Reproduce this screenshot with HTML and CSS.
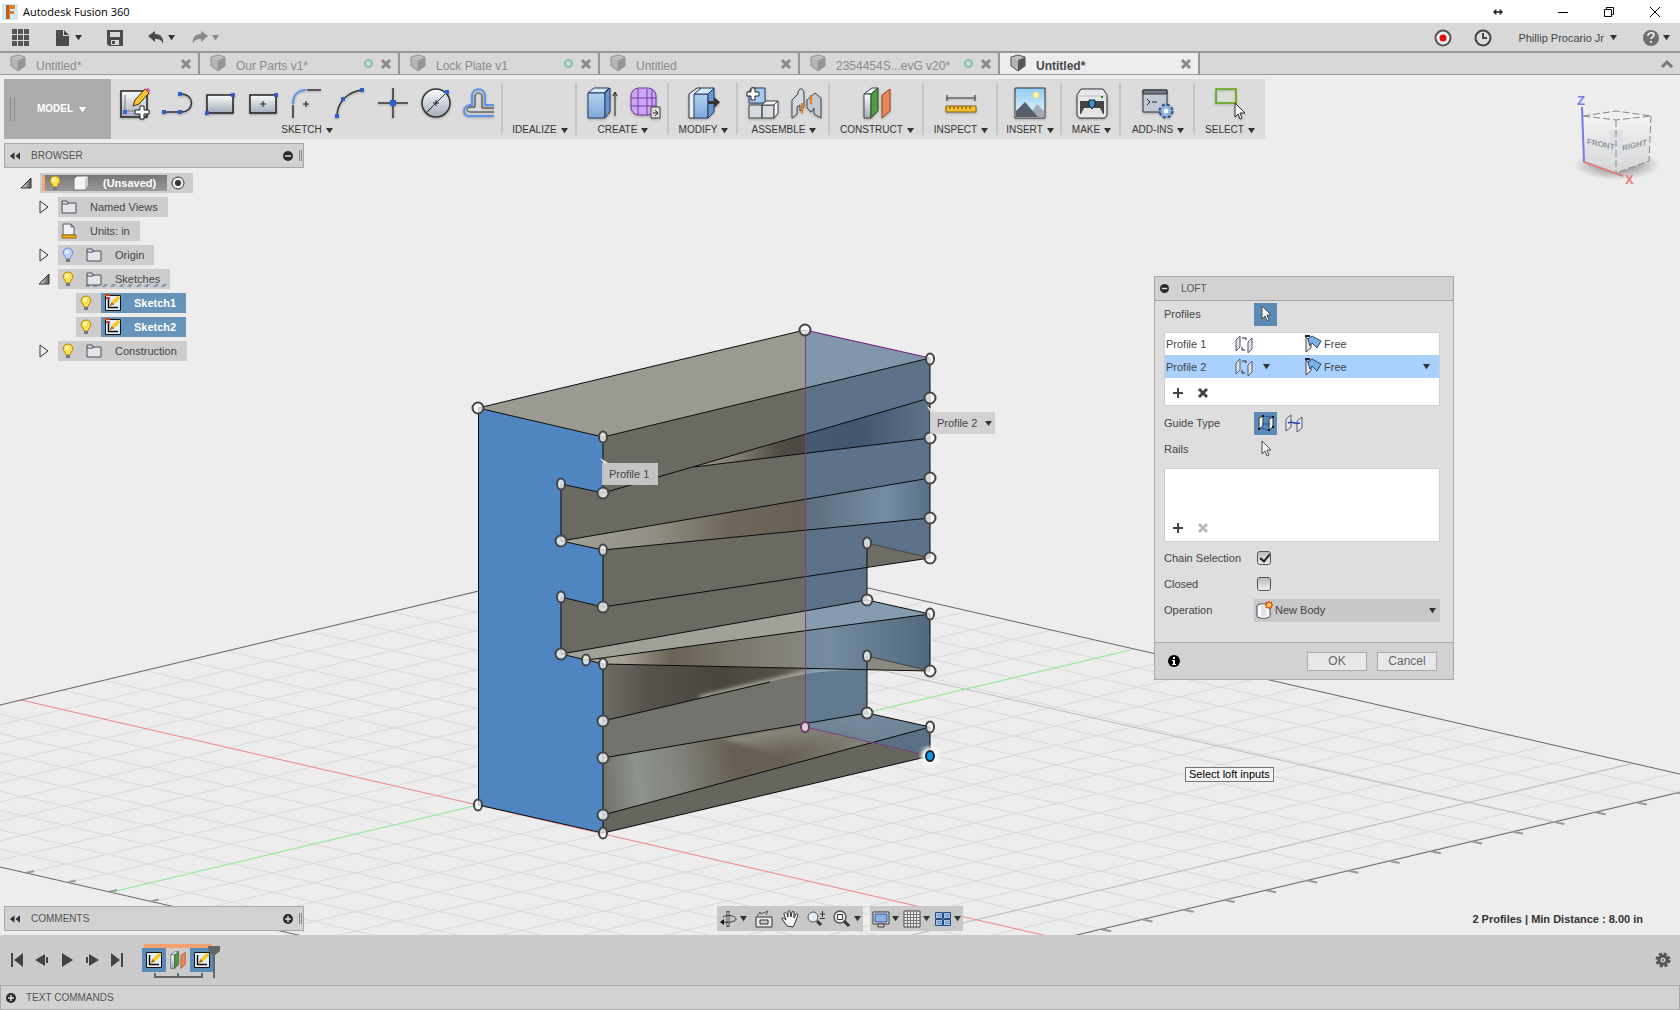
FILE: index.html
```html
<!DOCTYPE html>
<html lang="en">
<head>
<meta charset="utf-8">
<title>Autodesk Fusion 360</title>
<link rel="stylesheet" href="styles.css">
</head>
<body>
<svg class="defs" aria-hidden="true">
  <defs>
    <linearGradient id="g-steel" x1="0" y1="0" x2="0" y2="1"><stop offset="0" stop-color="#fafbfc"/><stop offset="1" stop-color="#a3abbb"/></linearGradient>
    <linearGradient id="g-blue" x1="0" y1="0" x2="0" y2="1"><stop offset="0" stop-color="#b4d2f0"/><stop offset="1" stop-color="#7fa8d8"/></linearGradient>
    <linearGradient id="g-sky" x1="0" y1="0" x2="0" y2="1"><stop offset="0" stop-color="#8ecdf5"/><stop offset="1" stop-color="#eef8fd"/></linearGradient>
    <linearGradient id="g-tri" x1="0" y1="0" x2="1" y2="0"><stop offset="0" stop-color="#eee"/><stop offset="1" stop-color="#555"/></linearGradient>
    <symbol id="i-down" viewBox="0 0 8 8"><path d="M0 1h8L4 7z" fill="currentColor"/></symbol>
    <symbol id="i-x" viewBox="0 0 12 12"><path d="M2 2l8 8M10 2l-8 8" stroke="currentColor" stroke-width="3"/></symbol>
    <symbol id="i-plus" viewBox="0 0 12 12"><path d="M6 1v10M1 6h10" stroke="currentColor" stroke-width="2"/></symbol>
    <symbol id="i-cubetab" viewBox="0 0 16 18"><path d="M8 1l7 2-7 3-7-3z" fill="#c0c0c0"/><path d="M1 3l7 3v11l-7-5z" fill="#b4b4b4"/><path d="M15 3L8 6v11l7-5z" fill="currentColor"/><path d="M8 1l7 2v9l-7 5-7-5V3z" fill="none" stroke="currentColor"/></symbol>
    <symbol id="i-rewind" viewBox="0 0 12 8"><path d="M6 0v8L1 4zM12 0v8L7 4z" fill="#333"/></symbol>
    <symbol id="i-minus-c" viewBox="0 0 10 10"><circle cx="5" cy="5" r="5" fill="#2b2b2b"/><path d="M2 5h6" stroke="#ddd" stroke-width="1.500"/></symbol>
    <symbol id="i-plus-c" viewBox="0 0 10 10"><circle cx="5" cy="5" r="5" fill="#2b2b2b"/><path d="M2 5h6M5 2v6" stroke="#ddd" stroke-width="1.500"/></symbol>
    <symbol id="i-bulb" viewBox="0 0 12 16"><path d="M6 1a4.600 4.600 0 0 1 3 8.300L8 12H4L3 9.300A4.600 4.600 0 0 1 6 1z" fill="#ffe04a" stroke="#b08a20"/><circle cx="5" cy="5" r="2" fill="#fff6b8"/><path d="M4 12h4v3H4z" fill="#777"/></symbol>
    <symbol id="i-bulb-off" viewBox="0 0 12 16"><path d="M6 1a4.600 4.600 0 0 1 3 8.300L8 12H4L3 9.300A4.600 4.600 0 0 1 6 1z" fill="#b9d0f7" stroke="#6f8dc8"/><circle cx="5" cy="5" r="2" fill="#e4eeff"/><path d="M4 12h4v3H4z" fill="#777"/></symbol>
    <symbol id="i-folder" viewBox="0 0 16 16"><path d="M1 14V2h5l1 2h8v10z" fill="#e3e5ea" stroke="#4a4f5c"/><path d="M1 5h6l1-1" fill="none" stroke="#4a4f5c"/></symbol>
    <symbol id="i-units" viewBox="0 0 16 16"><path d="M2 12V1h8l3 3v8z" fill="#f0f2f5" stroke="#555b68"/><path d="M10 1v3h3" fill="none" stroke="#555b68"/><path d="M1 12h14v3H1z" fill="#f0b020" stroke="#9a6a10"/></symbol>
    <symbol id="i-sketch" viewBox="0 0 18 18"><path d="M1.500 1.500h15v15h-15z" fill="#e4eefa" stroke="#111"/><path d="M4.500 4v9.500H14" fill="none" stroke="#111" stroke-width="1.500"/><path d="M6 12l1.500-4L14 1.500 16.500 4 10 10.500z" fill="#f9c81c"/><path d="M6 12l1.500-4 2.500 2.500z" fill="#b06a20"/></symbol>
    <symbol id="i-planes" viewBox="0 0 32 32"><path d="M3 7l8-6h6l-7 6z" fill="#f7f9fb" stroke="#444"/><path d="M3 7h7v24H3z" fill="url(#g-steel)" stroke="#444"/><path d="M10 7l7-6v23l-7 7z" fill="#4f9a42" stroke="#2b4e25"/><path d="M21 8l8-6v22l-8 7z" fill="#e8875a" stroke="#9a4324"/></symbol>
    <symbol id="i-cursor" viewBox="0 0 12 18"><path d="M2 1v13l3-3 2 5 2-1-2-5h4z" fill="#f4f4f8" stroke="#4a4a55"/></symbol>
    <symbol id="i-flip" viewBox="0 0 18 18"><path d="M1 5l4-4v11l-4 4zM13 7l4-4v11l-4 4z" fill="#dfe3f0" stroke="#555b68"/><path d="M7 3h4v2M10 15H7v-3" fill="none" stroke="#222"/></symbol>
    <symbol id="i-free" viewBox="0 0 18 18"><path d="M2 2v15l5-4V7z" fill="#e6e6e6" stroke="#444"/><path d="M4 4l4-3 9 5-4 7-5-5-2 3z" fill="#7db0e0" stroke="#23486e"/><path d="M1 1h5" stroke="#222" stroke-width="2"/></symbol>
  </defs>
</svg>

<header class="titlebar">
  <svg class="logo" viewBox="0 0 16 16"><rect width="16" height="16" fill="#cfe9f5"/><path d="M4 1h9v4H8v2h4v3H8v5H4z" fill="#e0802a"/><path d="M4 1h3v14H4z" fill="#b85f1c"/></svg>
  <h1>Autodesk Fusion 360</h1>
  <div class="wincontrols">
    <svg class="resize" viewBox="0 0 12 8"><path d="M0 4l4-4v3h4V0l4 4-4 4V5H4v3z" fill="#222"/></svg>
    <button aria-label="Minimize"><svg viewBox="0 0 12 12"><path d="M1 6.500h10" stroke="#000"/></svg></button>
    <button aria-label="Restore"><svg viewBox="0 0 12 12"><path d="M1.500 3.500h7v7h-7zM3.500 3v-1.500h7v7H9" fill="none" stroke="#000"/></svg></button>
    <button aria-label="Close"><svg viewBox="0 0 12 12"><path d="M1 1l10 10M11 1L1 11" stroke="#000"/></svg></button>
  </div>
</header>

<div class="quickbar">
  <div class="quick-left">
    <button aria-label="Data panel"><svg class="q18" viewBox="0 0 18 18"><path d="M0 0h5v5H0zM6 0h5v5H6zM12 0h5v5h-5zM0 6h5v5H0zM6 6h5v5H6zM12 6h5v5h-5zM0 12h5v5H0zM6 12h5v5H6zM12 12h5v5h-5z" fill="#555"/></svg></button>
    <button class="pair" aria-label="File"><svg class="q16" viewBox="0 0 16 16"><path d="M1 0h7v6h6v10H1z" fill="#4c4c4c"/><path d="M9 0l5 5H9z" fill="#4c4c4c"/></svg><svg class="dd"><use href="#i-down"/></svg></button>
    <button aria-label="Save"><svg class="q16" viewBox="0 0 16 16"><path d="M0 0h16v16H2l-2-2z" fill="#4c4c4c"/><path d="M3 2h10v5H3zM4 10h8v5H4z" fill="#d9d9d9"/><path d="M5 11h3v3H5z" fill="#4c4c4c"/></svg></button>
    <button class="pair" aria-label="Undo"><svg class="q16" viewBox="0 0 16 16"><path d="M0 6l7-5v3c6 0 9 4 8 10-1-4-4-5-8-5v3z" fill="#4c4c4c"/></svg><svg class="dd"><use href="#i-down"/></svg></button>
    <button class="pair dim" aria-label="Redo"><svg class="q16" viewBox="0 0 16 16"><path d="M16 6L9 1v3C3 4 0 8 1 14c1-4 4-5 8-5v3z" fill="#8a8a8a"/></svg><svg class="dd"><use href="#i-down"/></svg></button>
  </div>
  <div class="quick-right">
    <button aria-label="Record"><svg class="q18" viewBox="0 0 18 18"><circle cx="9" cy="9" r="7.500" fill="#eee" stroke="#555" stroke-width="2"/><circle cx="9" cy="9" r="3.500" fill="#e01010"/></svg></button>
    <button aria-label="Job status"><svg class="q18" viewBox="0 0 18 18"><circle cx="9" cy="9" r="7.500" fill="#ddd" stroke="#444" stroke-width="2"/><path d="M9 4v5h4" fill="none" stroke="#444" stroke-width="2"/></svg></button>
    <button class="account">Phillip Procario Jr <svg class="dd"><use href="#i-down"/></svg></button>
    <button class="help" aria-label="Help"><svg class="q18" viewBox="0 0 18 18"><circle cx="9" cy="9" r="8" fill="#6e6e6e"/><path d="M6 7c0-4 6-4 6-1 0 2-3 2-3 4M9 12v2" fill="none" stroke="#e4e4e4" stroke-width="2"/></svg><svg class="dd"><use href="#i-down"/></svg></button>
  </div>
</div>

<nav class="tabs">
  <div class="tab"><svg class="cube"><use href="#i-cubetab"/></svg><a href="#">Untitled*</a><button aria-label="Close"><svg><use href="#i-x"/></svg></button></div>
  <div class="tab"><svg class="cube"><use href="#i-cubetab"/></svg><a href="#">Our Parts v1*</a><i></i><button aria-label="Close"><svg><use href="#i-x"/></svg></button></div>
  <div class="tab"><svg class="cube"><use href="#i-cubetab"/></svg><a href="#">Lock Plate v1</a><i></i><button aria-label="Close"><svg><use href="#i-x"/></svg></button></div>
  <div class="tab"><svg class="cube"><use href="#i-cubetab"/></svg><a href="#">Untitled</a><button aria-label="Close"><svg><use href="#i-x"/></svg></button></div>
  <div class="tab"><svg class="cube"><use href="#i-cubetab"/></svg><a href="#">2354454S...evG v20*</a><i></i><button aria-label="Close"><svg><use href="#i-x"/></svg></button></div>
  <div class="tab active"><svg class="cube"><use href="#i-cubetab"/></svg><a href="#">Untitled*</a><button aria-label="Close"><svg><use href="#i-x"/></svg></button></div>
  <button class="collapse" aria-label="Collapse"><svg viewBox="0 0 14 10"><path d="M2 8l5-5 5 5" fill="none" stroke="#777" stroke-width="3"/></svg></button>
</nav>

<main class="viewport">
  <svg class="scene" viewBox="0 75 1680 860" preserveAspectRatio="xMidYMid slice">
    <defs>
      <linearGradient id="s1" gradientUnits="userSpaceOnUse" x1="694" y1="0" x2="930" y2="0"><stop offset="0" stop-color="#a09c90"/><stop offset=".2" stop-color="#7d796e"/><stop offset=".36" stop-color="#4f4c45"/><stop offset=".7" stop-color="#47453f"/><stop offset="1" stop-color="#6b6b64"/></linearGradient>
      <linearGradient id="s2" gradientUnits="userSpaceOnUse" x1="561" y1="0" x2="930" y2="0"><stop offset="0" stop-color="#a3a298"/><stop offset=".25" stop-color="#918f84"/><stop offset=".45" stop-color="#6e685b"/><stop offset=".65" stop-color="#686052"/><stop offset=".88" stop-color="#8b8d89"/><stop offset="1" stop-color="#66665f"/></linearGradient>
      <linearGradient id="s3" gradientUnits="userSpaceOnUse" x1="590" y1="0" x2="930" y2="0"><stop offset="0" stop-color="#aaa89b"/><stop offset=".1" stop-color="#a5a194"/><stop offset=".24" stop-color="#6a6355"/><stop offset=".45" stop-color="#7c7a70"/><stop offset=".7" stop-color="#8b8b84"/><stop offset="1" stop-color="#5c5d56"/></linearGradient>
      <linearGradient id="s4" gradientUnits="userSpaceOnUse" x1="603" y1="0" x2="840" y2="0"><stop offset="0" stop-color="#6e6d65"/><stop offset=".2" stop-color="#55524b"/><stop offset=".5" stop-color="#48453f"/><stop offset=".75" stop-color="#56534b"/><stop offset="1" stop-color="#9a988c"/></linearGradient>
      <linearGradient id="s5" gradientUnits="userSpaceOnUse" x1="603" y1="770" x2="930" y2="730"><stop offset="0" stop-color="#73746d"/><stop offset=".1" stop-color="#8f938d"/><stop offset=".23" stop-color="#81837c"/><stop offset=".4" stop-color="#665f52"/><stop offset=".55" stop-color="#676053"/><stop offset=".8" stop-color="#858378"/></linearGradient>
      <linearGradient id="s5b" gradientUnits="userSpaceOnUse" x1="770" y1="728" x2="776" y2="756"><stop offset="0" stop-color="#8f8d82"/><stop offset="1" stop-color="#8f8d82" stop-opacity="0"/></linearGradient>
      <filter id="soft"><feGaussianBlur stdDeviation="2"/></filter>
      <clipPath id="plane"><path d="M676 544L1719 783L1060 939L1000 960H400L-60 853V719z"/></clipPath>
      <clipPath id="dark"><path d="M603 664L867 670Q825 669 790 677L603 721z"/></clipPath>
      <clipPath id="base"><path d="M603 758L867 713L930 727L603 815z"/></clipPath>
      <g id="v"><ellipse rx="5.500" ry="5.500" fill="#fff" fill-opacity=".75" stroke="#444" stroke-width="2"/></g>
      <g id="e"><ellipse rx="4" ry="5.500" fill="#fff" fill-opacity=".75" stroke="#444" stroke-width="2"/></g>
    </defs>
    <g id="grid" clip-path="url(#plane)"></g>
    <g fill="none">
      <path d="M0 705L676 544L1719 783L1060 939M0 867L320 940" stroke="#666"/>
      <path d="M867 667L1555 822M1630 764L900 938" stroke="#bdbdbd"/>
      <path d="M21 700L1060 939" stroke="#f48a8a"/>
      <path d="M112 892L1130 650" stroke="#8ff08f"/>
      <path id="ticks" stroke="#999" stroke-width="2"/>
    </g>
    <g>
      <path d="M478 408L805 330L930 358L603 437z" fill="#9b9a90"/>
      <path d="M603 437L930 358V558L867 567V713L930 727V756L603 833V664L561 654V597L603 607V550L561 541V484L603 493z" fill="#6a6a63"/>
      <path d="M694 467L930 398V438z" fill="url(#s1)"/>
      <path d="M561 541L930 478V518L603 550z" fill="url(#s2)"/>
      <path d="M561 654L867 600L930 614L587 660z" fill="#a0a198"/>
      <path d="M587 660L930 614V671L603 664z" fill="url(#s3)"/>
      <path d="M603 721Q760 678 805 674L867 669V713L603 758z" fill="#72736c"/>
      <path d="M603 664L867 670Q825 669 790 677L603 721z" fill="url(#s4)"/>
      <path d="M700 698L790 677Q825 669 850 669" fill="none" stroke="#c4c1b3" stroke-width="4" filter="url(#soft)" clip-path="url(#dark)"/>
      <path d="M603 758L867 713L930 727L603 815z" fill="url(#s5)"/>
      <path d="M720 738L867 713L930 727L800 762z" fill="url(#s5b)" filter="url(#soft)" clip-path="url(#base)"/>
      <path d="M603 815L930 727V756L603 833z" fill="#66665f"/>
      <path d="M867 543L930 558L867 567z" fill="#6e6d64"/>
      <path d="M867 656L930 671L867 670z" fill="#8b8a80"/>
      <path d="M478 408L603 437V493L561 484V541L603 550V607L561 597V654L603 664V833L478 805z" fill="#4f86c1"/>
      <path d="M805 330L930 358V558L867 543V600L930 614V671L867 656V713L930 727V756L805 727z" fill="#2f8cf8" fill-opacity=".25"/>
    </g>
    <g fill="none" stroke="#0b0b0b">
      <path d="M478.500 408V805L603 833L930 756V727L867 713V656M478 408L805 330M478 408L603 437V493L561 484V541L603 550V607L561 597V654L603 664V833"/>
      <path d="M603 437L930 358M603 493L930 398M694 467L930 438M561 541L930 478M603 550L930 518M603 607L930 558M561 654L867 600L930 614M587 660L930 614V671M603 664L930 671M603 721L770 682M603 758L867 713M603 815L930 727M867 600V543M930 358V558"/>
      <path d="M867 543L930 558M867 656L930 671" stroke="#444"/>
      <path d="M930 358L805 330" stroke="#7d127d"/>
      <path d="M805.500 330V727L930 756" stroke="#7c3f7a"/>
    </g>
    <circle cx="930" cy="756" r="9" fill="#fff" filter="url(#soft)"/>
    <use href="#v" x="478" y="408"/><use href="#v" x="805" y="330"/><use href="#e" x="930" y="359"/><use href="#e" x="603" y="437"/>
    <use href="#v" x="603" y="493"/><use href="#e" x="561" y="484"/><use href="#v" x="561" y="541"/><use href="#e" x="603" y="550"/>
    <use href="#v" x="603" y="607"/><use href="#e" x="561" y="597"/><use href="#v" x="561" y="654"/><use href="#e" x="586" y="660"/>
    <use href="#e" x="603" y="664"/><use href="#v" x="603" y="721"/><use href="#v" x="603" y="758"/><use href="#v" x="603" y="815"/>
    <use href="#e" x="603" y="833"/><use href="#e" x="478" y="805"/><use href="#v" x="930" y="398"/><use href="#v" x="930" y="438"/>
    <use href="#v" x="930" y="478"/><use href="#v" x="930" y="518"/><use href="#v" x="930" y="558"/><use href="#e" x="867" y="543"/>
    <use href="#v" x="867" y="600"/><use href="#e" x="930" y="614"/><use href="#v" x="930" y="671"/><use href="#e" x="867" y="656"/>
    <use href="#v" x="867" y="713"/><use href="#e" x="930" y="727"/>
    <ellipse cx="805" cy="727" rx="4" ry="5" fill="#e0cbdc" stroke="#6d3b5e" stroke-width="2"/>
    <ellipse cx="930" cy="756" rx="4" ry="5" fill="#0d9be0" stroke="#223" stroke-width="2"/>
    <g class="callout">
      <path d="M600 458l10 6h-6zM927 406l10 7h-6z" fill="#e3e3e3"/>
      <rect x="602" y="463" width="56" height="22"/><text x="609" y="478">Profile 1</text>
      <rect x="930" y="412" width="65" height="22"/><text x="937" y="427">Profile 2</text>
      <path d="M985 421h7l-3.500 5z" fill="#333"/>
    </g>
  </svg>

  <div class="toolbar">
    <button class="workspace"><span class="grip"></span>MODEL <svg class="dd"><use href="#i-down"/></svg></button>
    <section class="group">
      <div class="icons">
        <button aria-label="Create Sketch"><svg viewBox="0 0 32 32"><path d="M2 4h26v26H2z" fill="url(#g-steel)" stroke="#222" stroke-width="1.500"/><path d="M6 8v16h10" fill="none" stroke="#777"/><rect x="4" y="23" width="4" height="4" fill="#2e6fd0"/><path d="M14 19l2-6L26 2l4 4-10 11z" fill="#f4c430" stroke="#4a3300"/><path d="M26 2l4 4 1-3-2-2z" fill="#e59"/><path d="M21 19h4v4h5v4h-5v5h-4v-5h-5v-4h5z" fill="#fff" stroke="#222"/></svg></button>
        <button aria-label="Line"><svg viewBox="0 0 32 32"><path d="M2 25h17c14 0 14-18 0-18" fill="none" stroke="#333" stroke-width="1.500"/><path d="M0 23h4v4H0zM16 23h4v4h-4zM16 5h4v4h-4z" fill="#2d63c8"/></svg></button>
        <button aria-label="Rectangle"><svg viewBox="0 0 32 32"><path d="M2 8h26v18H2z" fill="url(#g-steel)" stroke="#222" stroke-width="1.500"/><path d="M26 6h4v4h-4zM0 24h4v4H0z" fill="#2d63c8"/></svg></button>
        <button aria-label="Center Rectangle"><svg viewBox="0 0 32 32"><path d="M2 8h26v18H2z" fill="url(#g-steel)" stroke="#222" stroke-width="1.500"/><path d="M26 6h4v4h-4z" fill="#2d63c8"/><path d="M12 17h6M15 14v6" stroke="#222"/></svg></button>
        <button aria-label="Fillet"><svg viewBox="0 0 32 32"><path d="M2 18v13M16 3h14" stroke="#333" stroke-width="1.500"/><path d="M2 17C2 8 7 3 15 3" fill="none" stroke="#5b95ea" stroke-width="2"/><path d="M12 17h6M15 14v6" stroke="#222"/></svg></button>
        <button aria-label="Arc"><svg viewBox="0 0 32 32"><path d="M3 28C4 14 14 5 28 3" fill="none" stroke="#333" stroke-width="1.500"/><path d="M1 27h4v4H1zM7 10h4v4H7zM26 1h4v4h-4z" fill="#2d63c8"/></svg></button>
        <button aria-label="Point"><svg viewBox="0 0 32 32"><path d="M16 1v30M1 16h30" stroke="#333" stroke-width="1.500"/><path d="M13 13h6v6h-6z" fill="#2d63c8"/></svg></button>
        <button aria-label="Circle"><svg viewBox="0 0 32 32"><circle cx="16" cy="16" r="14" fill="url(#g-steel)" stroke="#333" stroke-width="1.500"/><path d="M6 26L27 5M13 16h6M16 13v6" stroke="#222"/><path d="M25 3h4v4h-4z" fill="#2d63c8"/></svg></button>
        <button aria-label="Offset"><svg viewBox="0 0 32 32"><path d="M31 29H6c-7 0-7-12 3-11V9c0-9 13-9 13 0v9h9" fill="none" stroke="#5b95ea" stroke-width="2"/><path d="M31 25H7c-4 0-4-5 0-5h5V9c0-4 7-4 7 0v12h12" fill="none" stroke="#333"/></svg></button>
      </div>
      <button class="menu">SKETCH <svg class="dd"><use href="#i-down"/></svg></button>
    </section>
    <section class="group"><div class="icons"></div><button class="menu">IDEALIZE <svg class="dd"><use href="#i-down"/></svg></button></section>
    <section class="group"><div class="icons">
      <button aria-label="Extrude"><svg viewBox="0 0 32 32"><path d="M2 6l6-5h15l-5 5z" fill="#d9e8f7" stroke="#1e3c66"/><path d="M2 6h17v25H2z" fill="url(#g-blue)" stroke="#1e3c66"/><path d="M19 6l5-5v24l-5 6z" fill="#6a96c9" stroke="#1e3c66"/><path d="M29 29V6M27 9l2-4 2 4" fill="none" stroke="#222"/></svg></button>
      <button aria-label="Form"><svg viewBox="0 0 32 32"><rect x="2" y="1" width="25" height="27" rx="8" fill="#cfa6f5" stroke="#6b3fa0"/><path d="M2 11h25M2 19h25M9 2v26M18 2v26M23 2v26" stroke="#6b3fa0" fill="none"/><path d="M22 20h9v11h-9z" fill="#ddd" stroke="#444"/><path d="M24 26h5l-3-3m3 3l-3 3" fill="none" stroke="#222"/></svg></button></div>
      <button class="menu">CREATE <svg class="dd"><use href="#i-down"/></svg></button></section>
    <section class="group"><div class="icons">
      <button aria-label="Press Pull"><svg viewBox="0 0 32 32"><path d="M1 7l8-6h4L7 7v24H1z" fill="#e9edf2" stroke="#333"/><path d="M6 7h14v24H6z" fill="url(#g-blue)" stroke="#1e3c66"/><path d="M6 7l7-6h13l-6 6z" fill="#d9e8f7" stroke="#1e3c66"/><path d="M20 7l6-6v24l-6 6z" fill="#6a96c9" stroke="#1e3c66"/><path d="M20 14h6v-4l6 5-6 6v-4h-6z" fill="#333"/></svg></button></div>
      <button class="menu">MODIFY <svg class="dd"><use href="#i-down"/></svg></button></section>
    <section class="group"><div class="icons">
      <button aria-label="New Component"><svg viewBox="0 0 32 32"><path d="M2 4l3-3h13v15H2z" fill="#a9c9ec" stroke="#1e3c66"/><path d="M2 18h13v13H2zM15 18h12v13H15z" fill="#d8dce2" stroke="#444"/><path d="M15 18l4-4h12l-4 4zM27 18l4-4v12l-4 5z" fill="#f2f4f6" stroke="#444"/><path d="M4 1h4v4h4v4H8v4H4V9H0V5h4z" fill="#fff" stroke="#222"/></svg></button>
      <button aria-label="Joint"><svg viewBox="0 0 32 32"><path d="M2 31V13l6-6c0-7 6-7 6 0v13l-4 4v-6l-3 2v7z" fill="#d4d9e0" stroke="#444"/><path d="M31 31V11l-6-5-8 7v8l4 4 3-4v6z" fill="#c3c9d2" stroke="#444"/><path d="M12 16v10M21 8v9" stroke="#f07a1a" stroke-width="2"/></svg></button></div>
      <button class="menu">ASSEMBLE <svg class="dd"><use href="#i-down"/></svg></button></section>
    <section class="group"><div class="icons"><button aria-label="Offset Plane"><svg><use href="#i-planes"/></svg></button></div>
      <button class="menu">CONSTRUCT <svg class="dd"><use href="#i-down"/></svg></button></section>
    <section class="group"><div class="icons"><button aria-label="Measure"><svg viewBox="0 0 32 32"><path d="M2 11h28M2 8v6M30 8v6" stroke="#333"/><path d="M1 19h30v6H1z" fill="#f0c02e" stroke="#8a6410"/><path d="M5 19v3M9 19v3M13 19v3M17 19v3M21 19v3M25 19v3" stroke="#6a4a08"/></svg></button></div>
      <button class="menu">INSPECT <svg class="dd"><use href="#i-down"/></svg></button></section>
    <section class="group"><div class="icons"><button aria-label="Decal"><svg viewBox="0 0 32 32"><path d="M1 1h30v30H1z" fill="url(#g-sky)" stroke="#333"/><circle cx="22" cy="8" r="3" fill="#fff4b0" stroke="#f3d96a"/><path d="M14 30l9-13 7 7v6z" fill="#a3aab6"/><path d="M2 24l9-9 13 15H2z" fill="#585f6c"/></svg></button></div>
      <button class="menu">INSERT <svg class="dd"><use href="#i-down"/></svg></button></section>
    <section class="group"><div class="icons"><button aria-label="3D Print"><svg viewBox="0 0 32 32"><path d="M5 2h22l4 6v20l-2 3H3l-2-3V8z" fill="#e6e8eb" stroke="#333"/><path d="M1 9h30" stroke="#bbb"/><path d="M4 14h24v13H4z" fill="#444"/><path d="M8 21h16l3 6H5z" fill="#e4e4e4"/><path d="M13 13h6v5l-3 4-3-4z" fill="#4a90d0" stroke="#123"/><path d="M25 9h2v2h-2z" fill="#1b7d1b"/></svg></button></div>
      <button class="menu">MAKE <svg class="dd"><use href="#i-down"/></svg></button></section>
    <section class="group"><div class="icons"><button aria-label="Scripts"><svg viewBox="0 0 32 32"><path d="M1 3h24v22H1z" fill="#c2cad8" stroke="#333"/><path d="M1 3h24v4H1z" fill="#70788a" stroke="#333"/><path d="M5 12l3 3-3 3M10 15h5" fill="none" stroke="#222"/><circle cx="24" cy="24" r="6" fill="none" stroke="#2f5488" stroke-width="3" stroke-dasharray="3 1.700"/><circle cx="24" cy="24" r="4" fill="#f4f8ff" stroke="#8db0dc" stroke-width="3"/></svg></button></div>
      <button class="menu">ADD-INS <svg class="dd"><use href="#i-down"/></svg></button></section>
    <section class="group"><div class="icons"><button aria-label="Select"><svg viewBox="0 0 32 32"><path d="M2 2h20v14H2z" fill="none" stroke="#58a800" stroke-width="1.500"/><path d="M21 16v14l3-3 2 5 2-1-2-5h5z" fill="#f4f4f8" stroke="#333"/></svg></button></div>
      <button class="menu">SELECT <svg class="dd"><use href="#i-down"/></svg></button></section>
  </div>

  <aside class="browser">
    <div class="panelbar"><svg class="rw"><use href="#i-rewind"/></svg><h2>BROWSER</h2><button aria-label="Minimize browser"><svg><use href="#i-minus-c"/></svg></button><span class="grip2"></span></div>
    <ul class="tree">
      <li><svg class="tw" viewBox="0 0 12 12"><path d="M11 1v10H1z" fill="url(#g-tri)" stroke="#333"/></svg><div class="node root"><div class="rootname"><svg class="bulb"><use href="#i-bulb"/></svg><svg class="ic" viewBox="0 0 16 16"><path d="M1 4l3-3h11v10l-3 4H1z" fill="#f4f5f7" stroke="#777"/><path d="M12 4l3-3v10l-3 4z" fill="#c8ccd4"/></svg><b>(Unsaved)</b></div><svg class="radio" viewBox="0 0 14 14"><circle cx="7" cy="7" r="6" fill="#eee" stroke="#333"/><circle cx="7" cy="7" r="3" fill="#333"/></svg></div></li>
      <li class="l2"><svg class="tw" viewBox="0 0 12 12"><path d="M2 0l8 6-8 6z" fill="#eee" stroke="#333"/></svg><div class="node"><svg class="ic"><use href="#i-folder"/></svg>Named Views</div></li>
      <li class="l2"><span class="tw"></span><div class="node"><svg class="ic"><use href="#i-units"/></svg>Units: in</div></li>
      <li class="l2"><svg class="tw" viewBox="0 0 12 12"><path d="M2 0l8 6-8 6z" fill="#eee" stroke="#333"/></svg><div class="node"><svg class="bulb"><use href="#i-bulb-off"/></svg><svg class="ic"><use href="#i-folder"/></svg>Origin</div></li>
      <li class="l2"><svg class="tw" viewBox="0 0 12 12"><path d="M11 1v10H1z" fill="url(#g-tri)" stroke="#333"/></svg><div class="node hatch"><svg class="bulb"><use href="#i-bulb"/></svg><svg class="ic"><use href="#i-folder"/></svg>Sketches</div></li>
      <li class="l3"><div class="node sk"><svg class="bulb"><use href="#i-bulb"/></svg><b><svg class="ic"><use href="#i-sketch"/><path d="M1 1h5M2 4h4" stroke="#d8431c" stroke-width="2"/></svg>Sketch1</b></div></li>
      <li class="l3"><div class="node sk"><svg class="bulb"><use href="#i-bulb"/></svg><b><svg class="ic"><use href="#i-sketch"/><path d="M1 1h5M2 4h4" stroke="#d8431c" stroke-width="2"/></svg>Sketch2</b></div></li>
      <li class="l2"><svg class="tw" viewBox="0 0 12 12"><path d="M2 0l8 6-8 6z" fill="#eee" stroke="#333"/></svg><div class="node"><svg class="bulb"><use href="#i-bulb"/></svg><svg class="ic"><use href="#i-folder"/></svg>Construction</div></li>
    </ul>
  </aside>

  <svg class="viewcube" viewBox="1560 85 120 110">
    <defs><radialGradient id="sh"><stop offset="0" stop-color="#000" stop-opacity=".5"/><stop offset="1" stop-color="#000" stop-opacity="0"/></radialGradient>
    <linearGradient id="cf" x1="0" y1="0" x2="0" y2="1"><stop offset="0" stop-color="#f3f3f3"/><stop offset="1" stop-color="#d6d6d6"/></linearGradient></defs>
    <ellipse cx="1617" cy="165" rx="43" ry="15" fill="url(#sh)"/>
    <path d="M1583 116L1616 111L1651 116L1616 120z" fill="#f0f0f0"/><path d="M1583 116L1616 120V173L1584 162z" fill="url(#cf)"/><path d="M1651 116L1616 120V173L1649 161z" fill="url(#cf)"/>
    <path d="M1610 131l6-1 7 0v32l-7 1-6-1z" fill="#dde0e4"/>
    <path d="M1583 116L1616 111L1651 116L1616 120zM1616 120V173M1651 116L1649 161L1616 173" fill="none" stroke="#888" stroke-dasharray="7 3"/>
    <path d="M1582 107L1584 162" stroke="#7a7af0" stroke-width="2"/><path d="M1584 162L1623 176" stroke="#d98080" stroke-width="2"/>
    <g class="face"><text transform="translate(1587 144) skewY(12)">FRONT</text><text transform="translate(1622 151) skewY(-14)">RIGHT</text></g>
    <text class="axis z" x="1577" y="105">Z</text><text class="axis x" x="1625" y="184">X</text>
  </svg>

  <form class="dialog">
    <h2><svg><use href="#i-minus-c"/></svg>LOFT</h2>
    <div class="fields">
      <div class="row"><span>Profiles</span><button type="button" class="tool on" aria-label="Select profiles"><svg><use href="#i-cursor"/></svg></button></div>
      <div class="list">
        <div class="item"><span>Profile 1</span><button type="button" aria-label="Flip"><svg class="s18"><use href="#i-flip"/></svg></button><label><svg class="s18"><use href="#i-free"/></svg><select aria-label="Condition 1"><option>Free</option></select></label></div>
        <div class="item sel"><span>Profile 2</span><button type="button" aria-label="Flip"><svg class="s18"><use href="#i-flip"/></svg><svg class="dd"><use href="#i-down"/></svg></button><label><svg class="s18"><use href="#i-free"/></svg><select aria-label="Condition 2"><option>Free</option></select><svg class="dd"><use href="#i-down"/></svg></label></div>
        <div class="edit"><button type="button" aria-label="Add"><svg><use href="#i-plus"/></svg></button><button type="button" aria-label="Remove"><svg><use href="#i-x"/></svg></button></div>
      </div>
      <div class="row"><span>Guide Type</span><button type="button" class="tool on" aria-label="Rails"><svg viewBox="0 0 18 18"><path d="M2 4l4-2v10l-4 3zM12 5l4-2v10l-4 3z" fill="#eee" stroke="#333"/><path d="M6 2c4 1 6 0 10 1M2 15c4-2 6 1 10 1M5 10h8" fill="none" stroke="#1f55c4"/><path d="M1 14h2v2H1zM5 1h2v2H5zM11 15h2v2h-2zM15 2h2v2h-2zM15 12h2v2h-2z" fill="#111"/></svg></button><button type="button" class="tool" aria-label="Centerline"><svg viewBox="0 0 18 18"><path d="M1 5l5-4v12l-5 4zM12 7l5-4v11l-5 4z" fill="#e6e8f0" stroke="#555b68"/><path d="M3 9c5-3 6 2 12 0" fill="none" stroke="#1f45b4" stroke-width="1.500"/></svg></button></div>
      <div class="row"><span>Rails</span><button type="button" class="tool" aria-label="Select rails"><svg><use href="#i-cursor"/></svg></button></div>
      <div class="list rails"><div class="edit"><button type="button" aria-label="Add"><svg><use href="#i-plus"/></svg></button><button type="button" class="off" aria-label="Remove"><svg><use href="#i-x"/></svg></button></div></div>
      <div class="row"><label for="chain">Chain Selection</label><input type="checkbox" id="chain" checked></div>
      <div class="row"><label for="closed">Closed</label><input type="checkbox" id="closed"></div>
      <div class="row"><label for="op">Operation</label><div class="combo"><svg class="s18" viewBox="0 0 18 18"><path d="M2 5c0-3 13-3 13 0v10c0 3-13 3-13 0z" fill="#fff" stroke="#3e4656"/><path d="M6 4h5v13H6z" fill="#dfe3ea"/><path d="M14 0l1 2 2-1-1 2 2 1-2 1 1 2-2-1-1 2-1-2-2 1 1-2-2-1 2-1-1-2 2 1z" fill="#ffd23c" stroke="#e2451a"/></svg><select id="op"><option>New Body</option></select><svg class="dd"><use href="#i-down"/></svg></div></div>
    </div>
    <footer><svg class="info" viewBox="0 0 12 12"><circle cx="6" cy="6" r="6"/><path d="M5 2h2v2H5zM4 5h3v4h1v1H4V9h1V6H4z" fill="#fff"/></svg><button type="button">OK</button><button type="button">Cancel</button></footer>
  </form>

  <output class="hint">Select loft inputs</output>

  <div class="bottom">
    <div class="panelbar"><svg class="rw"><use href="#i-rewind"/></svg><h2>COMMENTS</h2><button aria-label="Expand comments"><svg><use href="#i-plus-c"/></svg></button><span class="grip2"></span></div>
    <div class="navs">
      <div class="nav">
        <button aria-label="Orbit"><svg viewBox="0 0 18 18"><path d="M9 1v16" stroke="#444" stroke-width="3"/><path d="M9 2v14" stroke="#eee"/><path d="M4 7c5-3 13-1 13 2 0 2-5 4-13 3" fill="none" stroke="#333"/><path d="M1 12l4-3v6z" fill="#111"/></svg><svg class="dd"><use href="#i-down"/></svg></button>
        <button aria-label="Look At"><svg viewBox="0 0 18 18"><path d="M1 7h16v10H1z" fill="#e8e8ea" stroke="#333"/><path d="M5 10h8v4H5z" fill="#ccc" stroke="#333"/><path d="M2 6l3-4 1 2 7-3-2 4" fill="none" stroke="#555"/></svg></button>
        <button aria-label="Pan"><svg viewBox="0 0 18 18"><path d="M6 16L1 9c0-2 2-1 4 1L3 4c0-2 2-2 3 0l1 3V2c0-2 2-2 2 0l1 5 1-5c0-1 2-1 2 0v6l2-4c1-1 2 0 2 1l-3 8-2 4z" fill="#f6f6f6" stroke="#333"/></svg></button>
        <button aria-label="Zoom"><svg viewBox="0 0 18 18"><circle cx="6" cy="7" r="5" fill="#dff0f2" stroke="#555"/><path d="M10 11l4 4" stroke="#333" stroke-width="3"/><path d="M13 4h5M15.500 1v6M13 8.500h5" stroke="#333"/></svg></button>
        <button aria-label="Fit"><svg viewBox="0 0 18 18"><circle cx="7" cy="7" r="6" fill="#eee" stroke="#555" stroke-width="1.500"/><path d="M4.500 4.500h5v5h-5z" fill="#fff" stroke="#333"/><path d="M11 11l5 5" stroke="#333" stroke-width="3"/></svg><svg class="dd"><use href="#i-down"/></svg></button>
      </div>
      <div class="nav two">
        <button aria-label="Display"><svg viewBox="0 0 18 18"><path d="M1 2h16v12H1z" fill="#eee" stroke="#333"/><path d="M3 4h12v8H3z" fill="#8db4e4" stroke="#2c5387"/><path d="M6 14h6v3H6z" fill="#ddd" stroke="#333"/></svg><svg class="dd"><use href="#i-down"/></svg></button>
        <button aria-label="Grid"><svg viewBox="0 0 18 18"><path d="M1 1h16v16H1z" fill="#eee" stroke="#444"/><path d="M4.500 1v16M7.500 1v16M10.500 1v16M13.500 1v16M1 4.500h16M1 7.500h16M1 10.500h16M1 13.500h16" stroke="#777"/></svg><svg class="dd"><use href="#i-down"/></svg></button>
        <button aria-label="Viewports"><svg viewBox="0 0 18 18"><path d="M1.500 2.500h7v6h-7zM9.500 2.500h7v6h-7zM1.500 9.500h7v6h-7zM9.500 9.500h7v6h-7z" fill="#a8c5ea" stroke="#27497e"/><path d="M4 4.500h3v2H4zM12 4.500h3v2h-3zM4 11.500h3v2H4zM12 11.500h3v2h-3z" fill="none" stroke="#6f93c8"/></svg><svg class="dd"><use href="#i-down"/></svg></button>
      </div>
    </div>
    <p class="status">2 Profiles | Min Distance : 8.00 in</p>
  </div>
</main>

<div class="timeline">
  <div class="play">
    <button aria-label="Start"><svg viewBox="0 0 14 14"><path d="M1 0h2v14H1zM13 0v14L4 7z" fill="#444"/></svg></button>
    <button aria-label="Step back"><svg viewBox="0 0 14 14"><path d="M10 1v12L0 7zM11 4h2v6h-2z" fill="#444"/></svg></button>
    <button aria-label="Play"><svg viewBox="0 0 14 14"><path d="M2 0v14l11-7z" fill="#444"/></svg></button>
    <button aria-label="Step forward"><svg viewBox="0 0 14 14"><path d="M4 1v12l10-6zM1 4h2v6H1z" fill="#444"/></svg></button>
    <button aria-label="End"><svg viewBox="0 0 14 14"><path d="M1 0v14l9-7zM11 0h2v14h-2z" fill="#444"/></svg></button>
  </div>
  <div class="steps">
    <button class="on" aria-label="Sketch1"><svg><use href="#i-sketch"/></svg></button><button aria-label="Plane1"><svg><use href="#i-planes"/></svg></button><button class="on" aria-label="Sketch2"><svg><use href="#i-sketch"/></svg></button>
    <svg class="marks" viewBox="0 0 80 36"><path d="M2 0h68v4H2z" fill="#f5a070"/><path d="M66 2h12v5l-5 4h-2l-5-5zM71 8h2v26h-2z" fill="#666"/><path d="M13 29v4h47v-4M36 29v4" fill="none" stroke="#666" stroke-width="2"/></svg>
  </div>
  <button class="gear" aria-label="Settings"><svg viewBox="0 0 16 16"><circle cx="8" cy="8" r="6" fill="none" stroke="#555" stroke-width="3" stroke-dasharray="3 1.700"/><circle cx="8" cy="8" r="4" fill="none" stroke="#555" stroke-width="3"/><circle cx="8" cy="8" r="1" fill="#555"/></svg></button>
</div>

<footer class="textcmd"><button aria-label="Expand text commands"><svg><use href="#i-plus-c"/></svg></button><h2>TEXT COMMANDS</h2></footer>
<script src="scene.js"></script>
</body>
</html>
```
FILE: styles.css
```css
* { box-sizing: border-box; }
body { margin: 0; height: 100vh; display: flex; flex-direction: column; overflow: hidden; background: #ededed; color: #444; font: 11px/16px "Liberation Sans", Arial, sans-serif; }
button { border: 0; padding: 0; background: none; font: inherit; color: inherit; display: flex; align-items: center; justify-content: center; }
svg { display: block; flex: none; overflow: visible; }
h1, h2, p, ul { margin: 0; padding: 0; font-weight: normal; list-style: none; }
a { color: inherit; text-decoration: none; }
.defs { position: absolute; width: 0; height: 0; }
.dd { width: 7px; height: 7px; color: #333; }

.titlebar { height: 23px; flex: none; display: flex; align-items: center; background: #fff; padding: 0 19px 0 2px; }
.logo { width: 16px; height: 16px; }
.titlebar h1 { font: 11px/16px "Open Sans", sans-serif; color: #000; margin-left: 5px; flex: 1; }
.wincontrols { display: flex; align-items: center; }
.wincontrols button { margin-left: 34px; }
.wincontrols button svg { width: 12px; height: 12px; }
.wincontrols .resize { width: 10px; height: 8px; margin-right: 20px; }

.quickbar { height: 30px; flex: none; display: flex; justify-content: space-between; background: #d8d8d8; border-bottom: 2px solid #999; padding: 1px 10px 0 12px; }
.quick-left, .quick-right { display: flex; align-items: center; }
.quick-left { gap: 25px; }
.q18 { width: 18px; height: 18px; }
.q16 { width: 16px; height: 16px; }
.pair { gap: 4px; }
.quick-left .pair + .pair { margin-left: -8px; }
.dim .dd { color: #888; }
.quick-right button { margin-left: 22px; }
.quick-right .account { gap: 6px; margin-left: 26px; }
.quick-right .help { gap: 3px; margin-left: 25px; }

.tabs { height: 22px; flex: none; display: flex; background: #d8d8d8; border-bottom: 1px solid #999; }
.tab { width: 200px; display: flex; align-items: center; padding: 0 6px 0 10px; border-right: 2px solid #969696; font-size: 12px; color: #8a8a8a; }
.tab .cube { width: 16px; height: 18px; margin: 0 10px 2px 0; color: #959595; }
.tab a { flex: 1; padding-top: 4px; }
.tab i { width: 9px; height: 9px; border: 2px solid #7cc4b0; border-radius: 50%; margin-right: 7px; }
.tab button, .tab button svg { width: 12px; height: 12px; color: #888; }
.tab.active { background: #ededed; font-weight: bold; color: #4a4a4a; }
.tab.active .cube { color: #555; }
.collapse { margin-left: auto; margin-right: 6px; }
.collapse svg { width: 14px; height: 10px; }

.viewport { flex: 1; min-height: 0; position: relative; display: flex; flex-direction: column; align-items: flex-start; padding: 4px; }
.scene { position: absolute; inset: 0; width: 100%; height: 100%; overflow: hidden; }
.callout rect { fill: #cecece; fill-opacity: .9; }
.callout text { fill: #444; font-size: 11px; }

.toolbar { position: relative; display: grid; grid-template-columns: 107px 392px 74px 92px 69px 92px 94px 74px 64px 59px 74px 70px; height: 60px; background: #dcdcdc; }
.workspace { background: #acacac; color: #fff; font-size: 10px; font-weight: bold; gap: 6px; position: relative; padding-left: 8px; }
.workspace .dd { color: #fff; }
.grip { position: absolute; left: 6px; top: 18px; width: 5px; height: 24px; border: solid #8c8c8c; border-width: 0 1px; }
.group { display: flex; flex-direction: column; align-items: center; padding-top: 8px; background: linear-gradient(#c6c6c6, #c6c6c6) right 4px / 2px 52px no-repeat; }
.group:last-child { background: none; }
.icons { display: flex; gap: 11px; height: 32px; }
.icons svg { width: 32px; height: 32px; filter: drop-shadow(0 1px 1px #0004); }
.menu { font-size: 10px; line-height: 14px; gap: 4px; margin-top: 4px; color: #333; }

.browser { position: relative; margin-top: 4px; width: 300px; }
.panelbar { width: 300px; height: 25px; display: flex; align-items: center; background: #d2d2d2; border: 1px solid #a9a9a9; padding: 0 1px 0 4px; }
.rw { width: 11px; height: 8px; }
h2 { font-size: 10px; color: #555; }
.panelbar h2 { flex: 1; margin-left: 11px; }
.panelbar button svg, .textcmd button svg { width: 10px; height: 10px; }
.grip2 { width: 3px; height: 11px; border: solid #888; border-width: 0 1px; margin-left: 6px; }
.tree { padding: 5px 0 0 16px; display: flex; flex-direction: column; gap: 4px; }
.tree li { display: flex; align-items: center; }
.tree .l2 { padding-left: 18px; }
.tree .l3 { padding-left: 56px; }
.tw { width: 12px; height: 12px; margin-right: 8px; }
.node { height: 20px; display: flex; align-items: center; background: #cdcdcd; padding: 0 10px 0 3px; }
.bulb { width: 12px; height: 16px; margin: 0 12px 0 1px; }
.ic { width: 16px; height: 16px; margin-right: 13px; }
.tree .root { padding: 2px 8px 2px 2px; }
.rootname { height: 16px; display: flex; align-items: center; background: linear-gradient(#777, #999); border-left: 3px solid #f5a878; color: #fff; padding: 0 11px 0 3px; }
.rootname .ic { margin-right: 14px; }
.radio { width: 14px; height: 14px; margin-left: 4px; }
.node.sk { padding-right: 0; }
.node.sk .bulb { margin-right: 9px; }
.sk b { height: 20px; display: flex; align-items: center; background: #6893b8; color: #fff; padding: 0 10px 0 3px; }
.sk .ic { width: 18px; height: 18px; margin-right: 12px; }
.hatch { background: repeating-linear-gradient(135deg, #cdcdcd 0 3px, #8a9bbb 3px 6px) 25px 15px / 88px 3px no-repeat #cdcdcd; }

.viewcube { position: absolute; right: 0; top: 10px; width: 120px; height: 110px; }
.face text { font-size: 8px; font-weight: bold; fill: #8f959c; }
.axis { font-size: 13px; font-weight: bold; }
.axis.z { fill: #7a7af0; }
.axis.x { fill: #f07a7a; }

.dialog { position: absolute; right: 226px; top: 201px; width: 300px; background: #dedede; border: 1px solid #a9a9a9; }
.dialog h2 { height: 24px; display: flex; align-items: center; gap: 12px; padding-left: 5px; background: #d2d2d2; border-bottom: 1px solid #a9a9a9; }
.dialog h2 svg { width: 9px; height: 9px; }
.fields { padding: 0 13px 19px 9px; }
.row { height: 26px; display: flex; align-items: center; }
.row > :first-child { width: 90px; }
.tool { width: 23px; height: 23px; margin-right: 5px; }
.tool.on { background: #5a8ab5; }
.tool svg { width: 18px; height: 18px; }
.list { background: #fff; border: 1px solid #cfcfcf; margin: 5px 0 4px; height: 74px; }
.list.rails { margin: 6px 0 3px; display: flex; align-items: flex-end; }
.item { height: 22px; display: grid; grid-template-columns: 69px 69px 1fr; align-items: center; padding: 0 9px 0 1px; }
.item.sel { background: #a9d0ff; height: 23px; }
.item button { justify-content: flex-start; gap: 10px; }
.item label { display: flex; align-items: center; gap: 2px; }
.s18 { width: 18px; height: 18px; }
select { appearance: none; border: 0; background: none; font: inherit; color: inherit; padding: 0; flex: 1; }
.edit { display: flex; gap: 13px; padding: 9px 7px 7px; color: #444; }
.edit svg { width: 12px; height: 12px; }
.off { color: #bbb; }
.row input { appearance: none; width: 14px; height: 14px; margin: 0 3px; border: 1px solid #555; border-radius: 3px; background: linear-gradient(#bbb, #eee); }
.row input:checked { position: relative; }
.row input:checked::after { content: ""; position: absolute; left: 4px; top: 0; width: 4px; height: 8px; border: solid #222; border-width: 0 2px 2px 0; rotate: 40deg; }
.combo { flex: 1; height: 23px; background: #c8c8c8; display: flex; align-items: center; gap: 2px; padding: 0 4px 0 1px; }
.dialog footer { height: 37px; display: flex; align-items: center; gap: 10px; background: #d2d2d2; border-top: 1px solid #a9a9a9; padding: 0 16px 0 13px; }
.info { width: 12px; height: 12px; margin-right: auto; }
.dialog footer button { width: 60px; height: 19px; font-size: 12px; color: #666; background: #e8e8e8; border: 1px solid #aaa; }

.hint { position: absolute; left: 1185px; top: 692px; height: 15px; border: 1px solid #777; background: #f4f4f4; color: #000; line-height: 13px; padding: 0 3px; }

.bottom { position: relative; margin-top: auto; width: 100%; display: grid; grid-template-columns: 1fr auto 1fr; align-items: center; }
.navs { display: flex; gap: 7px; }
.nav { height: 25px; display: flex; align-items: center; gap: 8px; background: #c8c8c8; padding: 0 2px; }
.nav.two { gap: 4px; }
.nav button { gap: 3px; }
.nav.two button { gap: 2px; }
.nav svg:first-child { width: 18px; height: 18px; }
.status { justify-self: end; margin-right: 33px; font-weight: bold; color: #333; }

.timeline { height: 50px; flex: none; background: #cbcbcb; display: flex; align-items: center; padding: 0 9px 1px 10px; }
.play { display: flex; gap: 11px; }
.play svg { width: 14px; height: 14px; }
.steps { position: relative; display: flex; margin-left: 18px; }
.steps button { width: 24px; height: 24px; }
.steps button.on { background: #5a8ab5; }
.steps button svg { width: 18px; height: 18px; }
.marks { position: absolute; left: 0; top: -4px; width: 80px; height: 36px; }
.gear { margin-left: auto; }
.gear svg { width: 16px; height: 16px; }

.textcmd { height: 25px; flex: none; display: flex; align-items: center; gap: 10px; background: #d2d2d2; border: 1px solid #a9a9a9; padding: 0 5px; }
```
FILE: scene.js
```js
// Ground plane: one cell along the red axis is (41.5, 9.55), along the green axis (41.2, -9.77).
const NS = "http://www.w3.org/2000/svg";
const at = (i, j) => `${478 + i * 41.5 + j * 41.2} ${805 + i * 9.55 - j * 9.77}`;
let d = "";
for (let k = -30; k < 45; k++) d += `M${at(k, -30)}L${at(k, 40)}M${at(-30, k)}L${at(45, k)}`;
const minor = document.createElementNS(NS, "path");
minor.setAttribute("d", d);
minor.setAttribute("stroke", "#dadada");
minor.setAttribute("fill", "none");
document.getElementById("grid").append(minor);

// Ruler ticks on the two front edges.
let t = "";
for (let k = 1; k < 16; k++) t += `M${1060 + k * 41.2} ${939 - k * 9.75}l10 2`;
for (let k = 0; k < 6; k++) t += `M${26 + k * 41.5} ${873 + k * 9.5}l8 -2`;
document.getElementById("ticks").setAttribute("d", t);
```
